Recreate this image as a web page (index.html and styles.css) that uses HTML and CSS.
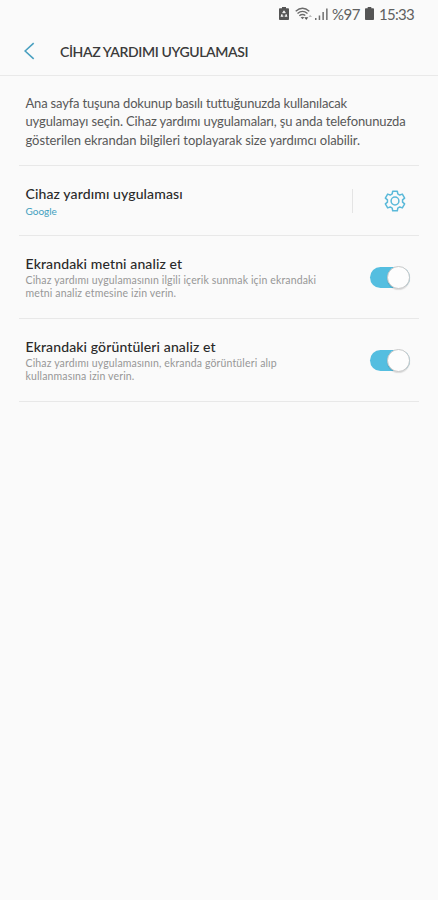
FILE: index.html
```html
<!DOCTYPE html>
<html lang="tr">
<head>
<meta charset="utf-8">
<title>Cihaz yardımı uygulaması</title>
<link rel="stylesheet" href="styles.css">
</head>
<body>
<div class="status">
  <svg class="saver" width="10" height="13" viewBox="0 0 10 13"><path d="M3 0h4v1.300h2.200q.8 0 .8.8v10q0 .9-.8.9H.8Q0 13 0 12.100V2.100q0-.8.8-.8H3z" fill="#555"/><path d="M3.700 6.200 5 4.300 6.300 6.200M3.100 7.300 2.400 9.200H4.300M6.900 7.300 7.600 9.200H5.700" fill="none" stroke="#fafafa" stroke-width="1.200"/></svg>
  <svg class="wifi" width="18" height="14" viewBox="0 0 18 14"><g fill="none" stroke="#6b6b6b" stroke-width="1.300"><path d="M.7 4.200Q7.500-1.700 14.300 4.200M2.500 6.500Q7.500 2.300 12.500 6.500M4.300 8.800Q7.500 6.300 10.300 8.500"/></g><path d="m5.600 10.300q1.900-1.300 3.800 0L7.500 12.300z" fill="#6b6b6b"/><path d="M9.300 10.300h4l-2 2.700z" fill="#555"/><path d="m13.500 10 1.700-2.300L17 10z" fill="#bbb"/></svg>
  <svg class="signal" width="13" height="12" viewBox="0 0 13 12"><path d="M0 10h1.500v2H0zM3.700 7.500h1.500V12H3.700zM7.400 4h1.500v8H7.400zM11.100.5h1.500V12h-1.500z" fill="#707070"/></svg>
  <span class="percent">%97</span>
  <svg class="battery" width="9" height="13" viewBox="0 0 9 13"><path d="M2.700 0h3.600v1.300h1.900q.8 0 .8.8v10q0 .9-.8.9H.8Q0 13 0 12.100V2.100q0-.8.8-.8h1.900z" fill="#555"/></svg>
  <span class="clock">15:33</span>
</div>
<header class="bar">
  <svg class="back" width="12" height="18" viewBox="0 0 12 18"><path d="M9.700 1.200 1.100 9l8.600 7.800" fill="none" stroke="#4aa0c0" stroke-width="1.600"/></svg>
  <h1 class="heading">CİHAZ YARDIMI UYGULAMASI</h1>
</header>
<main class="content">
  <p class="intro"><span class="l1">Ana sayfa tuşuna dokunup basılı tuttuğunuzda kullanılacak</span><br><span class="l2">uygulamayı seçin. Cihaz yardımı uygulamaları, şu anda telefonunuzda</span><br><span class="l3">gösterilen ekrandan bilgileri toplayarak size yardımcı olabilir.</span></p>
  <section class="row app">
    <div class="text"><h2 class="title">Cihaz yardımı uygulaması</h2><p class="value">Google</p></div>
    <div class="settings">
      <svg width="22" height="22" viewBox="0 0 22 22" fill="none" stroke="#5ab9d9" stroke-width="1.500" stroke-linejoin="round"><path d="M8.200 3.900 8.700 1.200H13.300L13.800 3.900 15.750 5.030 18.340 4.110 20.640 8.090 18.550 9.870V12.130L20.640 13.910 18.340 17.890 15.750 16.970 13.800 18.100 13.300 20.800H8.700L8.200 18.100 6.250 16.970 3.660 17.890 1.360 13.910 3.450 12.130V9.870L1.360 8.090 3.660 4.110 6.250 5.030z"/><circle cx="11" cy="11" r="3.900"/></svg>
    </div>
  </section>
  <section class="row option">
    <div class="text"><h2 class="title">Ekrandaki metni analiz et</h2><p class="desc">Cihaz yardımı uygulamasının ilgili içerik sunmak için ekrandaki<br>metni analiz etmesine izin verin.</p></div>
    <div class="switch"><div class="knob"></div></div>
  </section>
  <section class="row option">
    <div class="text"><h2 class="title">Ekrandaki görüntüleri analiz et</h2><p class="desc">Cihaz yardımı uygulamasının, ekranda görüntüleri alıp<br>kullanmasına izin verin.</p></div>
    <div class="switch"><div class="knob"></div></div>
  </section>
</main>
</body>
</html>
```
FILE: styles.css
```css
* { box-sizing: border-box; margin: 0; padding: 0; }
body { min-height: 900px; background: #fafafa; font-family: Lato, sans-serif; white-space: nowrap; }
svg { display: block; flex: none; }
.status { display: flex; align-items: center; height: 28px; padding-left: 279px; color: #606060; font-size: 15px; }
.saver, .battery { margin-bottom: 1px; }
.wifi { margin-left: 6px; }
.signal { margin-left: 2px; }
.percent { width: 29px; margin-left: 4px; letter-spacing: -.48px; }
.battery { margin-left: 4px; }
.clock { margin-left: 5px; letter-spacing: -.7px; }
.bar { display: flex; align-items: center; height: 48px; padding: 0 0 1px 24px; border-bottom: 1px solid #e9e9e9; }
.heading { margin-left: 24px; color: #3b3b3b; font-size: 14px; font-weight: 600; letter-spacing: -.38px; }
.content { padding: 0 19px; }
.intro { height: 90px; padding: 17.500px 0 0 6.500px; border-bottom: 1px solid #e8e8e8; color: #585858; font-size: 13px; line-height: 18.600px; }
.l1 { letter-spacing: -.18px; }
.l2 { letter-spacing: -.137px; }
.l3 { letter-spacing: -.075px; }
.row { display: flex; align-items: center; justify-content: space-between; padding: 0 9px 0 6.500px; border-bottom: 1px solid #e8e8e8; }
.app { height: 70px; padding-right: 13px; }
.option { height: 83px; }
.title { color: #292929; font-size: 14px; font-weight: 500; line-height: 18px; letter-spacing: .12px; }
.value { margin-top: 1px; color: #419fbf; font-size: 10px; line-height: 15px; }
.app .text { padding-top: 2px; }
.desc { margin-top: 1px; color: #979797; font-size: 10.500px; line-height: 12.800px; letter-spacing: .145px; }
.option .text { padding-top: 1.500px; }
.settings { display: flex; align-items: center; justify-content: flex-end; width: 54px; height: 24px; border-left: 1px solid #e4e4e4; }
.switch { display: flex; align-items: center; justify-content: flex-end; width: 40px; height: 21px; border-radius: 11px; background: #54bee0; }
.knob { flex: none; width: 23px; height: 23px; border: 1px solid #c9c9c9; border-radius: 50%; background: #fdfdfd; box-shadow: 0 1px 1px rgba(0, 0, 0, .12); }
```
